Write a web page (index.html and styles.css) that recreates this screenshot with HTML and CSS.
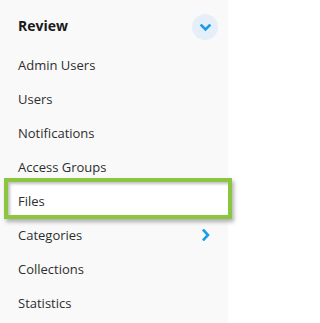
FILE: index.html
```html
<!DOCTYPE html>
<html>
<head>
<meta charset="utf-8">
<link rel="stylesheet" href="styles.css">
</head>
<body>
<nav class="panel">
  <div class="header">
    <span class="title">Review</span>
    <span class="toggle">
      <svg width="11" height="8" viewBox="0 0 11 8"><polyline points="1.5,1.5 5.5,5.5 9.5,1.5" fill="none" stroke="#1a9de6" stroke-width="2.6" stroke-linecap="square"/></svg>
    </span>
  </div>
  <ul class="menu">
    <li class="item"><span class="label">Admin Users</span></li>
    <li class="item"><span class="label">Users</span></li>
    <li class="item"><span class="label">Notifications</span></li>
    <li class="item"><span class="label">Access Groups</span></li>
    <li class="item active"><span class="label">Files</span></li>
    <li class="item"><span class="label">Categories</span>
      <svg class="arrow" width="8" height="12" viewBox="0 0 8 12"><polyline points="1.8,1.5 6,6 1.8,10.5" fill="none" stroke="#1a9de6" stroke-width="2.6" stroke-linecap="square"/></svg>
    </li>
    <li class="item"><span class="label">Collections</span></li>
    <li class="item"><span class="label">Statistics</span></li>
  </ul>
</nav>
</body>
</html>
```
FILE: styles.css
```css
html, body {
  margin: 0;
  padding: 0;
  background: #ffffff;
}
body {
  font-family: "Open Sans", "Noto Sans", sans-serif;
  color: #333333;
}
.panel {
  width: 228px;
  height: 323px;
  background: #f9f9f9;
}
.header {
  height: 48px;
  display: flex;
  align-items: center;
  justify-content: space-between;
  padding: 0 10px 0 18px;
  box-sizing: border-box;
}
.title {
  font-size: 14px;
  font-weight: 700;
  color: #1a1a1a;
  margin-top: 2px;
}
.toggle {
  width: 26px;
  height: 26px;
  border-radius: 50%;
  background: #e4eff9;
  display: flex;
  align-items: center;
  justify-content: center;
  margin-top: 6px;
}
.toggle svg {
  display: block;
  margin-top: 1px;
}
.menu {
  list-style: none;
  margin: 0;
  padding: 0;
}
.item {
  height: 34px;
  display: flex;
  align-items: center;
  justify-content: space-between;
  padding: 0 18px 0 18px;
  font-size: 13px;
  color: #2e2e2e;
  position: relative;
}
.label {
  position: relative;
  z-index: 1;
}
.arrow {
  display: block;
}
.active::before {
  content: "";
  position: absolute;
  left: 4px;
  right: -4px;
  top: -6px;
  bottom: -1px;
  border: 4px solid #8cc63f;
  background: #ffffff;
  box-shadow: 2px 3px 4px rgba(0, 0, 0, 0.3), inset 2px 2px 3px rgba(0, 0, 0, 0.25);
}
```
